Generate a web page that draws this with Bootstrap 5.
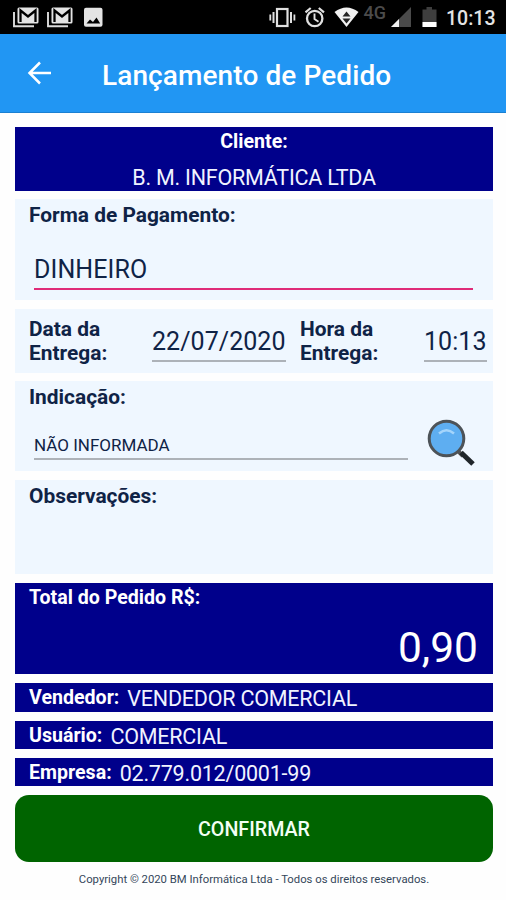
<!DOCTYPE html>
<html lang="pt-BR">
<head>
<meta charset="utf-8">
<meta name="viewport" content="width=device-width, initial-scale=1">
<title>Lançamento de Pedido</title>
<link href="https://cdn.jsdelivr.net/npm/bootstrap@5.3.0/dist/css/bootstrap.min.css" rel="stylesheet">
<style>
  body { font-family: Roboto, "Liberation Sans", sans-serif; color: #0f2346; background: #fefefe; overflow: hidden; }
  .status-bar { height: 34px; background: #000; color: #e4e4e4; }
  .clock { font-size: 19.5px; font-weight: 500; line-height: 37px; width: 49px; margin: 0 11px 0 60px; white-space: nowrap; }
  .net { font-size: 18px; font-weight: 500; line-height: 26px; color: #4b4b4b; }
  .app-bar { height: 79px; background: #2196f3; border-bottom: 1px solid #1a80d2; }
  .back-icon { margin-left: 27px; }
  .app-title { font-size: 28px; font-weight: 500; line-height: 32px; margin-left: 50px; padding-top: 6px; letter-spacing: .1px; }
  .screen { padding: 14px 13px 0 15px; }
  .screen > * + * { margin-top: 9px; }
  .screen > .tight { margin-top: 8px; }
  .panel { background: #eff7ff; padding: 3.5px 20px 0 14px; }
  .panel-navy { background: #00008b; color: #fff; padding: 1.5px 14px 0; }
  .label { font-size: 20.9px; font-weight: 700; line-height: 25px; }
  .panel-navy .label { font-size: 19.6px; }
  .value { font-size: 21.5px; line-height: 28px; letter-spacing: -.22px; color: #f0f3ff; }
  .field { font-size: 25px; line-height: 30px; border-bottom: 2px solid #adb2b8; }
  .h-client { height: 64px; } .h-pay { height: 101px; } .h-date { height: 64px; }
  .h-ref { height: 90px; } .h-obs { height: 94px; } .h-total { height: 91px; }
  .h-line { height: 28px; } .h-line-lg { height: 29px; }
  .client-name { margin-top: 10px; }
  .pay-field { margin: 25px 0 0 5px; padding: 2.5px 0 0 0; border-bottom: 2px solid #df2b78; height: 37.5px; letter-spacing: .1px; }
  .date-field, .time-field { height: 36px; padding-top: 1px; margin-top: 13.5px; letter-spacing: .05px; }
  .date-field { width: 134px; } .time-field { width: 63px; }
  .date-label, .time-label { line-height: 24.5px; }
  .date-label { width: 123px; }
  .time-label { width: 124px; margin-left: 14px; }
  .ref-row { margin-top: 9px; }
  .ref-field { font-size: 17px; line-height: 25px; width: 374px; height: 27px; margin: 0 0 8px 5px; flex: none; }
  .search-icon { margin-left: 19px; flex: none; }
  .total { font-size: 42.5px; line-height: 50px; margin: 13.5px 1px 0 0; }
  .btn-confirm { height: 67px; background: #006400; border-radius: 14px; font-size: 19.7px; font-weight: 500; color: #f4fff4; padding-top: 9px; }
  .legal { font-size: 11.3px; line-height: 17px; color: #34465a; }
</style>
</head>
<body>
<div class="status-bar d-flex align-items-start">
  <svg width="506" height="34" viewBox="0 0 506 34" class="position-absolute" aria-hidden="true">
    <g id="mail">
      <path d="M14 12v14.200h20" fill="none" stroke="#dcdcdc" stroke-width="1.900"/>
      <rect x="17.500" y="7.500" width="21" height="16" rx="1.500" fill="#e4e4e4"/>
      <path d="M20.500 22V10.500l7.500 6 7.500-6V22" fill="none" stroke="#000" stroke-width="2.300"/>
    </g>
    <use href="#mail" x="34"/>
    <rect x="84" y="7.800" width="18.500" height="19" rx="2" fill="#e4e4e4"/>
    <path d="M86.500 23.500l3.500-4 3 2.500 3.500-4.500 3.700 6z" fill="#000"/>
    <g fill="none" stroke="#e0e0e0">
      <rect x="277" y="9" width="10.500" height="17" stroke-width="2.200"/>
      <path d="M273.500 12v11M291 12v11" stroke-width="2"/>
      <path d="M270.300 14.500v6M294.400 14.500v6" stroke-width="1.800"/>
      <circle cx="314.700" cy="18.500" r="7.700" stroke-width="2.300"/>
      <path d="M314.500 13.500v5.500l4 2.700" stroke-width="1.900"/>
      <path d="M305.500 12.300l5.200-4.300M324 12.300l-5.200-4.300" stroke-width="2.200"/>
    </g>
    <path d="M334.500 12q12-9 24 0l-12 15z" fill="#f2f2f2"/>
    <path d="M342.500 16.500l4-5 4 5zM342.500 18.500h8l-4 5z" fill="#222"/>
    <path d="M391 27l20-20v20z" fill="#4a4a4a"/><path d="M391 27l8-8v8z" fill="#f0f0f0"/>
    <path d="M422.500 9.500h4V7h5.500v2.500h4.500V27h-14z" fill="#3e3e3e"/><path d="M422.500 22h14v5h-14z" fill="#fff"/>
  </svg>
  <span class="net ms-auto">4G</span>
  <span class="clock">10:13</span>
</div>
<header class="app-bar d-flex align-items-center text-white">
  <svg class="back-icon" width="25" height="24" viewBox="0 0 25 24" fill="none" stroke="#fff" stroke-width="2.500" aria-label="Voltar"><path d="M24 12H3M13 1.500L2.500 12 13 22.500"/></svg>
  <h1 class="app-title mb-0">Lançamento de Pedido</h1>
</header>
<main class="screen d-flex flex-column">
  <section class="panel-navy h-client text-center">
    <div class="label">Cliente:</div>
    <div class="value client-name">B. M. INFORMÁTICA LTDA</div>
  </section>
  <section class="panel h-pay tight">
    <div class="label">Forma de Pagamento:</div>
    <div class="field pay-field">DINHEIRO</div>
  </section>
  <section class="panel h-date d-flex align-items-start pe-0">
    <div class="label date-label mt-1">Data da<br>Entrega:</div>
    <div class="field date-field">22/07/2020</div>
    <div class="label time-label mt-1">Hora da<br>Entrega:</div>
    <div class="field time-field">10:13</div>
  </section>
  <section class="panel h-ref tight">
    <div class="label">Indicação:</div>
    <div class="ref-row d-flex align-items-end">
      <div class="field ref-field">NÃO INFORMADA</div>
      <svg class="search-icon" width="48" height="49" viewBox="0 0 48 49" aria-label="Pesquisar">
        <path d="M31 32l5 5" stroke="#555" stroke-width="4"/>
        <path d="M34 33.500l12 11.500" stroke="#20262a" stroke-width="5"/>
        <circle cx="19.500" cy="19.500" r="17.300" fill="#5eaef1" stroke="#4d5358" stroke-width="3"/>
        <path d="M12 14.500q7.500-6.500 15 0" fill="none" stroke="#a5d5fb" stroke-width="2.500"/>
      </svg>
    </div>
  </section>
  <section class="panel h-obs">
    <div class="label">Observações:</div>
  </section>
  <section class="panel-navy h-total">
    <div class="label">Total do Pedido R$:</div>
    <div class="total text-end">0,90</div>
  </section>
  <section class="panel-navy h-line-lg d-flex"><span class="label">Vendedor:</span><span class="value ms-2">VENDEDOR COMERCIAL</span></section>
  <section class="panel-navy h-line d-flex"><span class="label">Usuário:</span><span class="value ms-2">COMERCIAL</span></section>
  <section class="panel-navy h-line d-flex"><span class="label">Empresa:</span><span class="value ms-2">02.779.012/0001-99</span></section>
  <button type="button" class="btn btn-confirm border-0">CONFIRMAR</button>
  <footer class="legal text-center">Copyright © 2020 BM Informática Ltda - Todos os direitos reservados.</footer>
</main>
<script src="https://cdn.jsdelivr.net/npm/bootstrap@5.3.0/dist/js/bootstrap.bundle.min.js"></script>
</body>
</html>
